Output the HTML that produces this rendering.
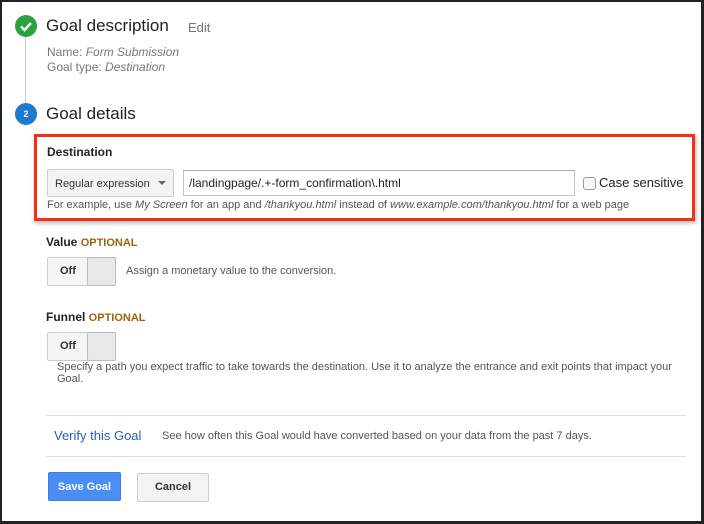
<!DOCTYPE html>
<html><head><style>
*{margin:0;padding:0;box-sizing:border-box}
body{width:704px;height:524px;overflow:hidden;background:#fff;font-family:"Liberation Sans",Arial,sans-serif;position:relative}
.frame{position:absolute;left:0;top:0;width:704px;height:524px;border:2px solid #222;border-right-width:3px;border-bottom-width:3px}
.a{position:absolute;white-space:nowrap}
.g{color:#777;font-size:12px}
.tog{position:absolute;left:47px;width:69px;height:29px;border:1px solid #ccc;border-radius:2px;background:#f5f5f5}
.tog span{position:absolute;left:12px;top:7px;font-size:11px;font-weight:bold;color:#333}
.tog i{position:absolute;left:39px;top:-1px;width:29px;height:29px;border:1px solid #bbb;border-radius:2px;background:#e8e8e8}
.opt{color:#a0610b;font-size:11px;font-weight:bold}
</style></head><body>
<div class="frame"></div>
<div class="a" style="left:25px;top:37px;width:1px;height:66px;background:#ccc"></div>
<svg class="a" style="left:15px;top:15px" width="22" height="22"><circle cx="11" cy="11" r="11" fill="#2da13f"/><path d="M6 11.5l3.5 3.5 6.5-7" stroke="#fff" stroke-width="2.4" fill="none"/></svg>
<div class="a" style="left:46px;top:16px;font-size:17px;color:#222">Goal description</div>
<div class="a" style="left:188px;top:20px;font-size:13px;color:#777">Edit</div>
<div class="a g" style="left:47px;top:45px">Name: <i>Form Submission</i></div>
<div class="a g" style="left:47px;top:60px">Goal type: <i>Destination</i></div>
<div class="a" style="left:15px;top:103px;width:22px;height:22px;border-radius:50%;background:#1e7ad0;color:#fff;font-size:9px;font-weight:bold;text-align:center;line-height:22px">2</div>
<div class="a" style="left:46px;top:104px;font-size:17px;color:#222">Goal details</div>
<div class="a" style="left:34px;top:134px;width:661px;height:87px;border:3px solid #f2301a;box-shadow:1px 2px 4px rgba(0,0,0,.3)"></div>
<div class="a" style="left:47px;top:145px;font-size:12px;font-weight:bold;color:#222">Destination</div>
<div class="a" style="left:47px;top:169px;width:127px;height:28px;border:1px solid #ccc;border-radius:2px;background:#f3f3f3;font-size:11px;color:#333;padding:8px 0 0 7px">Regular expression<span style="position:absolute;left:110px;top:11px;border:4px solid transparent;border-top:4px solid #666"></span></div>
<div class="a" style="left:183px;top:170px;width:392px;height:26px;border:1px solid #c4c4c4;border-top-color:#aaa;font-size:12px;color:#222;padding:5px 0 0 5px">/landingpage/.+-form_confirmation\.html</div>
<div class="a" style="left:583px;top:177px;width:13px;height:13px;border:1px solid #999;border-radius:3px;background:#f8f8f8"></div>
<div class="a" style="left:599px;top:175px;font-size:13px;color:#222">Case sensitive</div>
<div class="a" style="left:47px;top:199px;font-size:11px;color:#555">For example, use <i>My Screen</i> for an app and <i>/thankyou.html</i> instead of <i>www.example.com/thankyou.html</i> for a web page</div>
<div class="a" style="left:46px;top:235px;font-size:12px;font-weight:bold;color:#222">Value <span class="opt">OPTIONAL</span></div>
<div class="tog" style="top:257px"><span>Off</span><i></i></div>
<div class="a" style="left:126px;top:265px;font-size:11px;color:#555">Assign a monetary value to the conversion.</div>
<div class="a" style="left:46px;top:310px;font-size:12px;font-weight:bold;color:#222">Funnel <span class="opt">OPTIONAL</span></div>
<div class="tog" style="top:332px"><span>Off</span><i></i></div>
<div class="a" style="left:57px;top:361px;font-size:11px;color:#555;line-height:12px">Specify a path you expect traffic to take towards the destination. Use it to analyze the entrance and exit points that impact your<br>Goal.</div>
<div class="a" style="left:46px;top:415px;width:640px;height:1px;background:#ddd"></div>
<div class="a" style="left:54px;top:428px;font-size:13px;color:#2a5db0">Verify this Goal</div>
<div class="a" style="left:162px;top:430px;font-size:11px;color:#555">See how often this Goal would have converted based on your data from the past 7 days.</div>
<div class="a" style="left:46px;top:456px;width:640px;height:1px;background:#ddd"></div>
<div class="a" style="left:48px;top:472px;width:73px;height:29px;background:#4a8ef5;border:1px solid #3f7fe0;border-radius:2px;color:#fff;font-size:11px;font-weight:bold;text-align:center;line-height:29px">Save Goal</div>
<div class="a" style="left:137px;top:473px;width:72px;height:29px;background:#f3f3f3;border:1px solid #ccc;border-radius:2px;color:#333;font-size:11px;font-weight:bold;text-align:center;line-height:27px">Cancel</div>
</body></html>
